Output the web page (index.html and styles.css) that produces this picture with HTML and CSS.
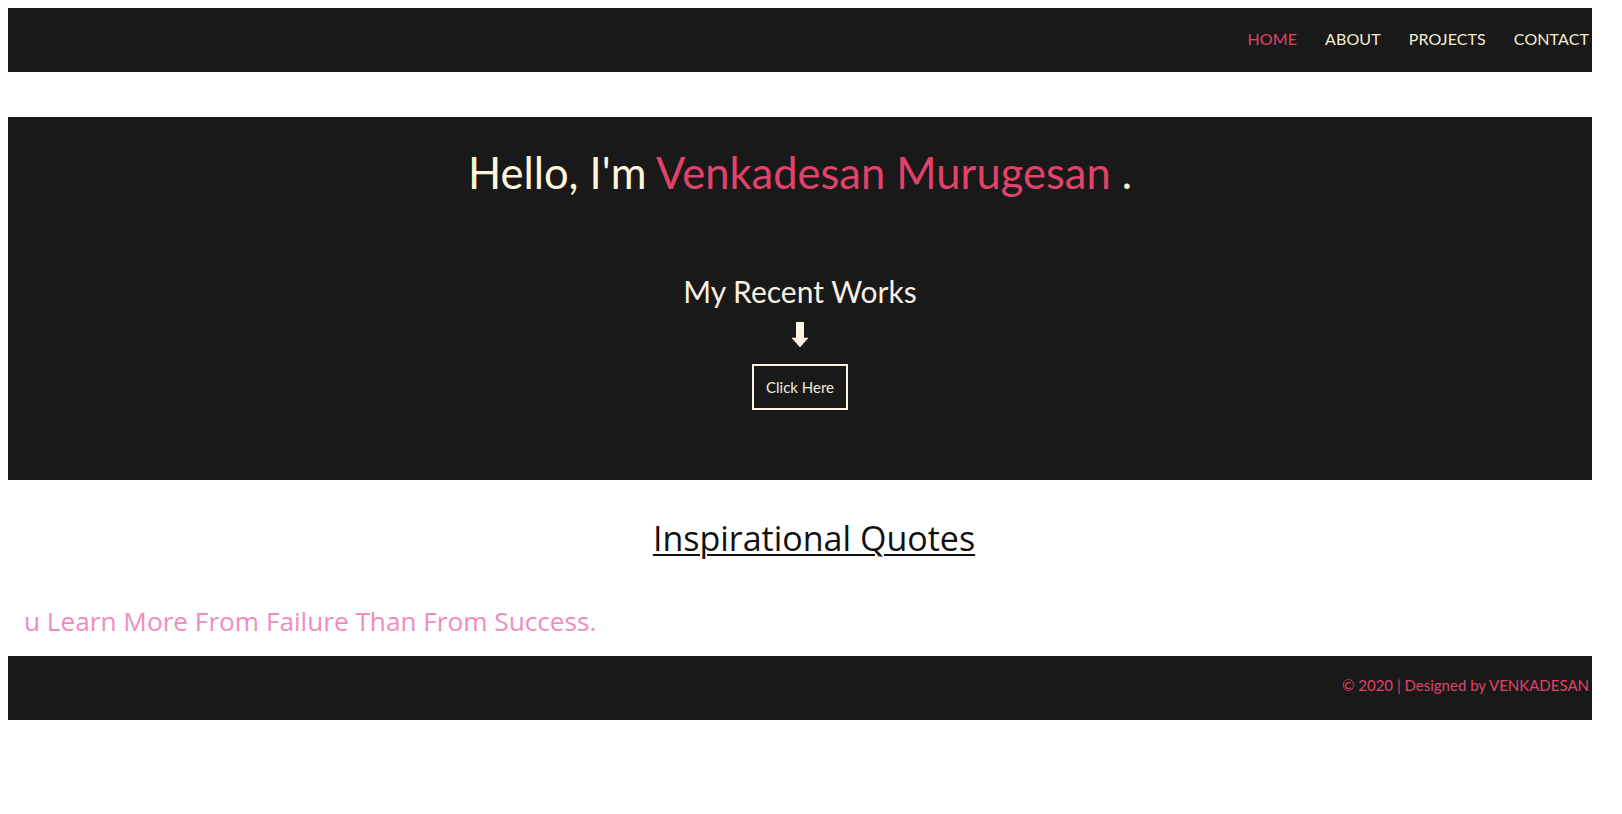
FILE: index.html
```html
<!DOCTYPE html>
<html lang="en">
<head>
<meta charset="utf-8">
<title>Venkadesan Murugesan</title>
<link rel="stylesheet" href="styles.css">
</head>
<body>
<div class="page">
  <nav class="navbar">
    <ul class="nav-list">
      <li><a class="nav-link active" href="#">HOME</a></li>
      <li><a class="nav-link" href="#">ABOUT</a></li>
      <li><a class="nav-link" href="#">PROJECTS</a></li>
      <li><a class="nav-link" href="#">CONTACT</a></li>
    </ul>
  </nav>

  <section class="hero">
    <h1 class="hero-title">Hello, I'm <span class="accent">Venkadesan Murugesan</span> .</h1>
    <h2 class="hero-sub">My Recent Works</h2>
    <svg class="hero-arrow" width="16" height="25" viewBox="0 0 16 25" aria-hidden="true">
      <rect x="4" y="0" width="8" height="16.5" fill="#fbf3e6"/>
      <polygon points="0,16 16,16 8,25" fill="#fbf3e6" stroke="#fbf3e6" stroke-width="0.6" stroke-linejoin="round"/>
    </svg>
    <a class="hero-btn" href="#">Click Here</a>
  </section>

  <section class="quotes">
    <h2 class="quotes-title">Inspirational Quotes</h2>
    <p class="quote-text">u Learn More From Failure Than From Success.</p>
  </section>

  <footer class="footer">
    <p class="footer-text">© 2020 | Designed by VENKADESAN</p>
  </footer>
</div>
</body>
</html>
```

FILE: styles.css
```css
html, body {
  margin: 0;
  padding: 0;
  background: #ffffff;
}

body {
  margin: 8px;
  font-family: Lato, "Open Sans", sans-serif;
}

.page {
  width: 1584px;
  display: flex;
  flex-direction: column;
}

/* NAV */
.navbar {
  background: #191919;
  height: 64px;
  display: flex;
  justify-content: flex-end;
  align-items: center;
  padding-right: 3px;
}

.nav-list {
  list-style: none;
  margin: 0;
  padding: 0 0 3px;
  display: flex;
  gap: 28px;
}

.nav-link {
  font-family: Lato, sans-serif;
  font-size: 16px;
  line-height: 20px;
  color: #f5ecd3;
  text-decoration: none;
  letter-spacing: 0.1px;
}

.nav-link.active {
  color: #e0426b;
}

/* HERO */
.hero {
  margin-top: 45px;
  background: #191919;
  height: 363px;
  box-sizing: border-box;
  padding-top: 30px;
  display: flex;
  flex-direction: column;
  align-items: center;
}

.hero-title {
  margin: 0;
  font-family: Lato, sans-serif;
  font-weight: 400;
  font-size: 43.5px;
  line-height: 50px;
  color: #fdf6dc;
}

.accent {
  color: #e0426b;
}

.hero-sub {
  margin: 76px 0 0;
  font-family: Lato, sans-serif;
  font-weight: 400;
  font-size: 30px;
  line-height: 36px;
  color: #f8f0e3;
}

.hero-arrow {
  display: block;
  margin-top: 13px;
}

.hero-btn {
  margin-top: 17px;
  display: block;
  border: 2px solid #fbf1e4;
  padding: 11px 12px;
  font-family: Lato, sans-serif;
  font-size: 15px;
  line-height: 20px;
  color: #f5ecdf;
  text-decoration: none;
}

/* QUOTES */
.quotes {
  display: flex;
  flex-direction: column;
  padding-top: 38px;
  height: 176px;
  box-sizing: border-box;
}

.quotes-title {
  margin: 0;
  padding-left: 28px;
  text-align: center;
  font-family: "Open Sans", sans-serif;
  font-weight: 400;
  font-size: 34px;
  line-height: 40px;
  color: #111111;
  text-decoration: underline;
  text-decoration-thickness: 2px;
  text-underline-offset: 3px;
}

.quote-text {
  margin: 45px 0 0;
  padding-left: 16px;
  font-family: "Open Sans", sans-serif;
  font-size: 26.2px;
  line-height: 36px;
  color: #ef8cbf;
}

/* FOOTER */
.footer {
  background: #191919;
  height: 64px;
  display: flex;
  justify-content: flex-end;
  align-items: center;
  padding-right: 3px;
}

.footer-text {
  margin: 0;
  padding-bottom: 7px;
  font-family: Lato, sans-serif;
  font-size: 15px;
  line-height: 20px;
  color: #e0426b;
}
```
